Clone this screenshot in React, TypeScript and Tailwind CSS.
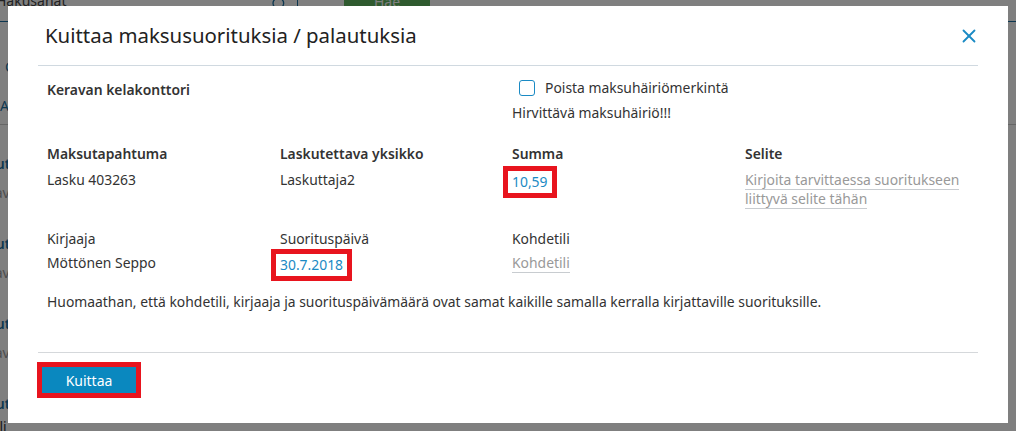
import { X, Search } from "lucide-react";

const font = { fontFamily: '"Noto Sans", "Open Sans", sans-serif' };

function BackgroundPage() {
  return (
    <div className="absolute inset-0 bg-white text-[14px]" style={font}>
      <div className="flex h-[22px] items-start border-b border-[#1a6fa0]">
        <div className="ml-[-4px] w-[275px] -mt-[10px] text-[#444]">Hakusanat</div>
        <Search className="-mt-[4px] h-4 w-4 text-[#1a6fa0]" />
        <div className="ml-[10px] h-[18px] w-px bg-[#1a6fa0]" />
        <div className="ml-[46px] flex h-[12px] w-[86px] items-end justify-center bg-[#5fb45f] text-white">Hae</div>
      </div>
      <div className="ml-[5px] mt-[34px] text-[#1a6fa0]">C</div>
      <div className="mt-[18px] border-b border-[#ccc] pb-[8px] text-[#1a6fa0]">Asiakkuuden</div>
      <div className="flex flex-col gap-[30px] pt-[28px]">
        {[0, 1, 2].map((i) => (
          <div key={i} className="-ml-[12px]">
            <div className="font-semibold text-[#1a6fa0]">Sutus</div>
            <div className="mt-[8px] text-[#999]">Tavallinen</div>
          </div>
        ))}
        <div className="-ml-[12px]">
          <div className="font-semibold text-[#1a6fa0]">Sutus</div>
          <div className="mt-[2px] text-[#333]">Tili</div>
          <div className="mt-[2px] text-[#999]">Tavallinen</div>
        </div>
      </div>
    </div>
  );
}

function Highlight({ children }: { children: React.ReactNode }) {
  return (
    <span className="-ml-[9px] inline-block border-[5px] border-[#e8141e] px-[4px] py-[1px] leading-[20px] text-[#1a8ac4]">
      {children}
    </span>
  );
}

export default function App() {
  return (
    <div className="relative h-[431px] w-[1016px] overflow-hidden">
      <BackgroundPage />
      <div className="absolute inset-0 bg-black/50" />
      <div
        className="absolute left-[8px] top-[6px] flex h-[417px] w-[1000px] flex-col bg-white px-[30px] text-[13.9px] text-[#333]"
        style={font}
      >
        <div className="flex h-[60px] items-center justify-between border-b border-[#d0d9e0] pl-[7px]">
          <h1 className="text-[20.4px] font-normal text-[#222]">Kuittaa maksusuorituksia / palautuksia</h1>
          <X className="mr-[-2px] h-[22px] w-[22px] text-[#1a8ac4]" strokeWidth={2} />
        </div>

        <div className="grid grid-cols-[233px_232px_233px_1fr] pl-[9px]">
          <div className="col-span-2 mt-[14px] font-semibold">Keravan kelakonttori</div>
          <div className="col-span-2 mt-[12px]">
            <label className="ml-[7px] flex items-center gap-[10px]">
              <span className="h-[16px] w-[16px] rounded-[3px] border border-[#1a8ac4]" />
              <span>Poista maksuhäiriömerkintä</span>
            </label>
            <div className="mt-[4px]">Hirvittävä maksuhäiriö!!!</div>
          </div>

          <div className="mt-[20px] font-semibold">Maksutapahtuma</div>
          <div className="mt-[20px] font-semibold">Laskutettava yksikko</div>
          <div className="mt-[20px] font-semibold">Summa</div>
          <div className="mt-[20px] font-semibold">Selite</div>

          <div className="mt-[5px]">Lasku 403263</div>
          <div className="mt-[5px]">Laskuttaja2</div>
          <div className="mt-[1px]">
            <Highlight>10,59</Highlight>
          </div>
          <div className="mt-[5px] leading-[19px] text-[#999]">
            <span className="border-b border-[#c8ccd0]">Kirjoita tarvittaessa suoritukseen</span>
            <br />
            <span className="border-b border-[#c8ccd0]">liittyvä selite tähän</span>
          </div>

          <div className="mt-[21px]">Kirjaaja</div>
          <div className="mt-[21px]">Suorituspäivä</div>
          <div className="mt-[21px]">Kohdetili</div>
          <div />

          <div className="mt-[4px]">Möttönen Seppo</div>
          <div className="mt-0">
            <Highlight>30.7.2018</Highlight>
          </div>
          <div className="mt-[4px] text-[#999]">
            <span className="border-b border-[#c8ccd0]">Kohdetili</span>
          </div>
          <div />

          <div className="col-span-4 mt-[11px]">
            Huomaathan, että kohdetili, kirjaaja ja suorituspäivämäärä ovat samat kaikille samalla kerralla kirjattaville suorituksille.
          </div>
        </div>

        <div className="mt-[39px] border-t border-[#d5d8db] pt-[9px]">
          <div className="-ml-[1px] inline-block border-[5px] border-[#e8141e]">
            <button className="h-[26px] w-[94px] bg-[#0a88bf] text-[14px] text-white">Kuittaa</button>
          </div>
        </div>
      </div>
    </div>
  );
}
